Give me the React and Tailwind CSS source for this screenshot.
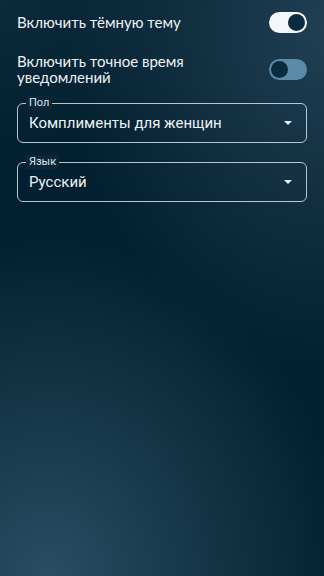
const Toggle = ({ on }) => (
    <div
        className={`relative w-[38px] h-[21px] rounded-full flex items-center shrink-0 ${on ? 'bg-[#f4f6f7] justify-end' : 'bg-[#5c8ba7] justify-start'}`}
    >
        <div className="w-[17px] h-[17px] rounded-full bg-[#0b2b40] mx-[2px]" />
    </div>
);

const SelectField = ({ label, value }) => (
    <div className="relative h-[40px] rounded-[6px] border border-[#b9c8d0] flex items-center pl-[11px] pr-[14px]">
        <span className="absolute -top-[8px] left-[8px] px-[3px] text-[11px] leading-[14px] text-[#dfe6ea] bg-[#0a2638] font-['Roboto',sans-serif]">
            {label}
        </span>
        <span className="flex-1 text-[15px] text-[#eef2f4] font-['Roboto',sans-serif]">{value}</span>
        <svg width="8" height="4" viewBox="0 0 8 4">
            <path d="M0 0 L8 0 L4 4 Z" fill="#eef2f4" />
        </svg>
    </div>
);

export default function App() {
    return (
        <div className="w-[324px] h-[576px] overflow-hidden font-['Lato',sans-serif] bg-[#02202f] bg-[radial-gradient(ellipse_260px_340px_at_100%_5%,#213f53,transparent),radial-gradient(ellipse_300px_340px_at_15%_100%,#2a4d62,transparent),radial-gradient(ellipse_200px_150px_at_0%_0%,#0c2a3b,transparent)]">
            <div className="px-[17px] pt-[11px] flex flex-col">
                <div className="flex items-center justify-between">
                    <span className="text-[15px] leading-[22px] text-[#eef2f4]">Включить тёмную тему</span>
                    <Toggle on />
                </div>
                <div className="flex items-center justify-between mt-[20px]">
                    <span className="text-[15px] leading-[16px] text-[#eef2f4]">
                        Включить точное время<br />уведомлений
                    </span>
                    <Toggle on={false} />
                </div>
                <div className="mt-[18px]">
                    <SelectField label="Пол" value="Комплименты для женщин" />
                </div>
                <div className="mt-[19px]">
                    <SelectField label="Язык" value="Русский" />
                </div>
            </div>
        </div>
    );
}
